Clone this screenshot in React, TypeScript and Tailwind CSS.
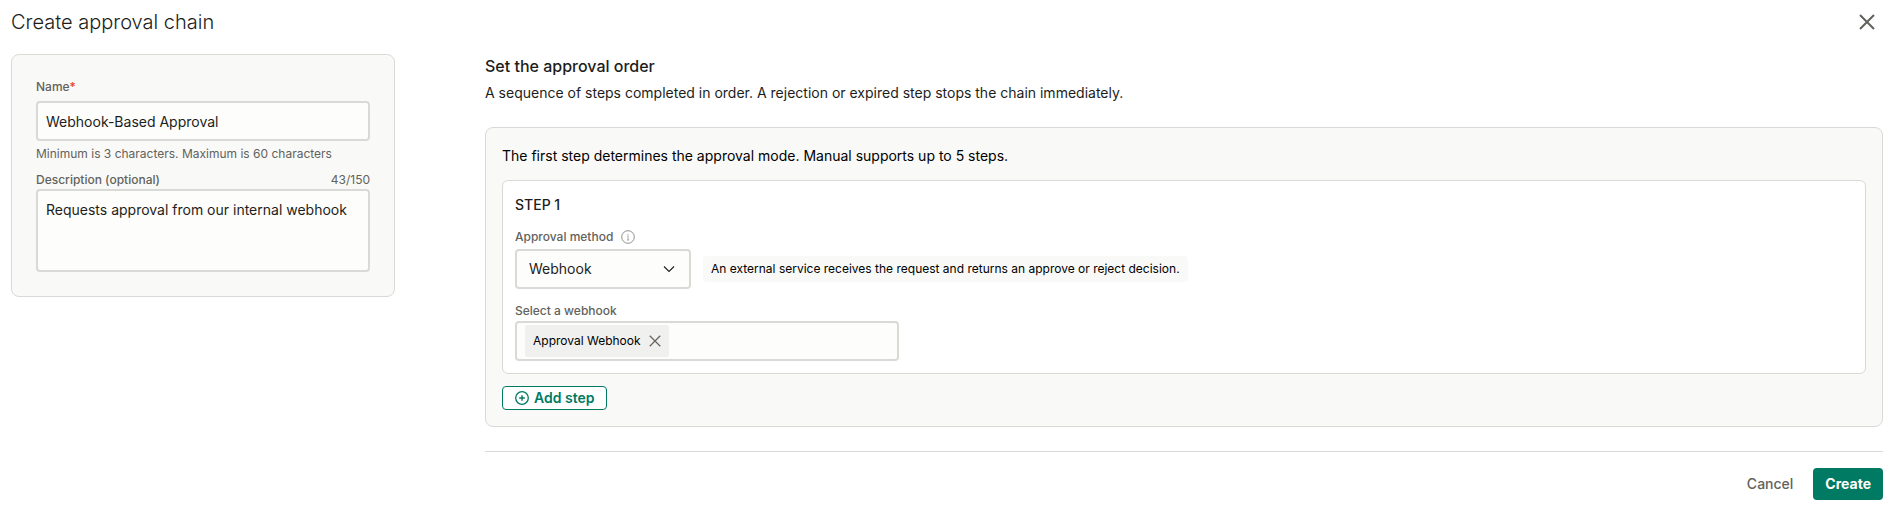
import { useState } from 'react';

const fieldClass =
  'w-full rounded border-2 border-[#d9d9d6] bg-[#fdfdfb] px-2 text-sm text-[#1d1d1b] outline-none focus:border-[#007a62]';

const labelClass = 'text-xs leading-4 font-medium text-[#62625c]';

function CloseIcon({ className }: { className?: string }) {
  return (
    <svg viewBox="0 0 16 16" className={className} fill="none" stroke="currentColor" aria-hidden="true">
      <path d="M1 1l14 14M15 1L1 15" />
    </svg>
  );
}

function InfoIcon() {
  return (
    <svg viewBox="0 0 14 14" className="size-3.5 text-[#85857f]" fill="none" stroke="currentColor" aria-hidden="true">
      <circle cx="7" cy="7" r="6.3" strokeWidth="0.9" />
      <path d="M6.2 6h0.9v4M6 10h2.2" strokeWidth="0.7" />
      <circle cx="7" cy="4.2" r="0.5" fill="currentColor" stroke="none" />
    </svg>
  );
}

function PlusCircleIcon() {
  return (
    <svg viewBox="0 0 14 14" className="size-3.5" fill="none" stroke="currentColor" aria-hidden="true">
      <circle cx="7" cy="7" r="6.3" strokeWidth="1.3" />
      <path d="M7 4.2v5.6M4.2 7h5.6" strokeWidth="1.4" />
    </svg>
  );
}

function ChevronIcon() {
  return (
    <svg
      viewBox="0 0 12 8"
      className="pointer-events-none absolute top-4 right-4 h-2 w-3"
      fill="none"
      stroke="#1d1d1b"
      aria-hidden="true"
    >
      <path d="M1 1.5l5 5 5-5" strokeWidth="1.1" />
    </svg>
  );
}

function DetailsCard() {
  const [name, setName] = useState('Webhook-Based Approval');
  const [description, setDescription] = useState('Requests approval from our internal webhook');

  return (
    <section className="w-96 shrink-0 rounded-lg border border-[#d9d9d6] bg-[#f9f9f7] p-6">
      <label htmlFor="chain-name" className={`block ${labelClass}`}>
        Name<span className="text-[#e8432d]">*</span>
      </label>
      <input
        id="chain-name"
        className={`mt-1.5 block h-10 ${fieldClass}`}
        value={name}
        onChange={(e) => setName(e.target.value)}
      />
      <p className="mt-[5px] text-xs leading-4 text-[#62625c]">Minimum is 3 characters. Maximum is 60 characters</p>

      <div className="mt-2.5 flex items-center justify-between">
        <label htmlFor="chain-description" className={labelClass}>
          Description (optional)
        </label>
        <span className="text-xs leading-4 text-[#62625c]">{description.length}/150</span>
      </div>
      <textarea
        id="chain-description"
        className={`mt-px block h-[83px] resize-none py-[7px] leading-6 ${fieldClass}`}
        maxLength={150}
        value={description}
        onChange={(e) => setDescription(e.target.value)}
      />
    </section>
  );
}

function StepCard() {
  return (
    <article className="mt-3 rounded-md border border-[#d9d9d6] bg-white p-3">
      <h3 className="pt-0.5 text-sm leading-5 font-medium">STEP 1</h3>

      <div className="mt-3.5 flex items-center gap-2">
        <label htmlFor="approval-method" className={labelClass}>
          Approval method
        </label>
        <InfoIcon />
      </div>
      <div className="mt-1 flex items-center gap-3">
        <div className="relative w-44">
          <select
            id="approval-method"
            defaultValue="webhook"
            className="h-10 w-full appearance-none rounded border-2 border-[#d9d9d6] bg-[#fdfdfb] px-3 text-sm"
          >
            <option value="webhook">Webhook</option>
            <option value="manual">Manual</option>
          </select>
          <ChevronIcon />
        </div>
        <p className="rounded bg-[#f9f9f7] px-2 py-1 text-xs leading-[18px] text-black">
          An external service receives the request and returns an approve or reject decision.
        </p>
      </div>

      <label htmlFor="webhook" className={`mt-3.5 block ${labelClass}`}>
        Select a webhook
      </label>
      <div className="mt-0.5 flex h-10 w-96 items-center rounded border-2 border-[#d9d9d6] bg-[#fdfdfb] px-2">
        <span className="flex h-8 shrink-0 items-center gap-2 rounded-xs bg-[#f0f0ee] px-2 text-xs text-black">
          Approval Webhook
          <button type="button" aria-label="Remove Approval Webhook" className="text-[#62625c]">
            <CloseIcon className="size-3 stroke-[1.6]" />
          </button>
        </span>
        <input id="webhook" className="min-w-0 flex-1 bg-transparent px-2 text-sm outline-none" />
      </div>
    </article>
  );
}

export default function App() {
  return (
    <main className="bg-white pr-[9px] pb-2 pl-[11px] font-['Inter',sans-serif] text-[#1d1d1b]">
      <header className="flex h-11 items-center justify-between pr-2">
        <h1 className="text-xl font-light">Create approval chain</h1>
        <button type="button" aria-label="Close" className="text-[#62625c]">
          <CloseIcon className="size-4 stroke-2" />
        </button>
      </header>

      <div className="mt-2.5 flex items-start gap-[90px]">
        <DetailsCard />

        <section className="min-w-0 flex-1">
          <h2 className="text-base leading-6 font-medium">Set the approval order</h2>
          <p className="mt-[3px] text-sm leading-6">
            A sequence of steps completed in order. A rejection or expired step stops the chain immediately.
          </p>

          <div className="mt-[22px] rounded-lg border border-[#d9d9d6] bg-[#f9f9f7] p-4">
            <p className="text-sm leading-6 text-black">
              The first step determines the approval mode. Manual supports up to 5 steps.
            </p>
            <StepCard />
            <button
              type="button"
              className="mt-3 flex h-6 items-center gap-[5px] rounded border border-[#007a62] bg-white px-3 text-sm font-semibold text-[#007a62]"
            >
              <PlusCircleIcon />
              Add step
            </button>
          </div>

          <footer className="mt-6 flex items-center justify-end gap-5 border-t border-[#d9d9d6] pt-4">
            <button type="button" className="text-sm font-medium text-[#62625c]">
              Cancel
            </button>
            <button type="button" className="h-8 rounded bg-[#007a62] px-3 text-sm font-bold text-white">
              Create
            </button>
          </footer>
        </section>
      </div>
    </main>
  );
}
